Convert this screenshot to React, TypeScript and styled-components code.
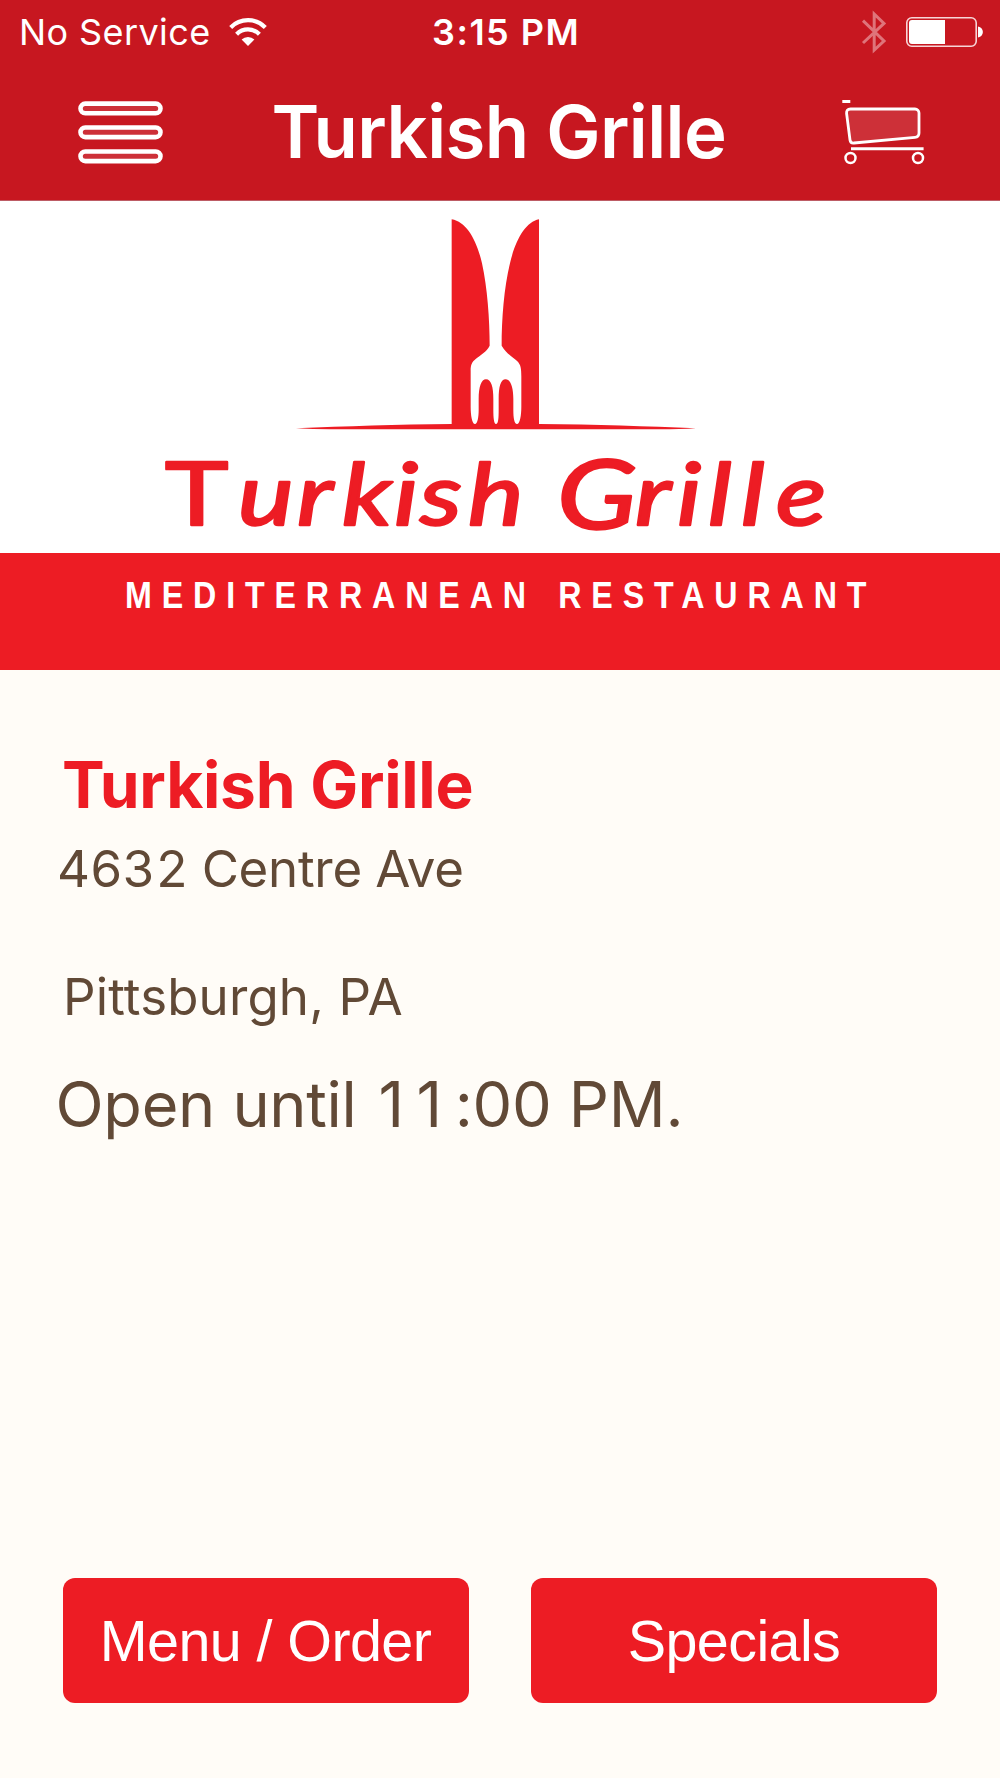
import React from "react";
import styled, { createGlobalStyle } from "styled-components";

const RED = "#ed1c24";
const BAR = "#c71720";
const INK = "#614936";
const PAPER = "#fffcf7";

const GlobalStyle = createGlobalStyle`
  *, *::before, *::after { box-sizing: border-box; }
  body { margin: 0; background: ${PAPER}; }
`;

const Screen = styled.div`
  display: flex;
  flex-direction: column;
  width: 1000px;
  height: 1778px;
  background: ${PAPER};
  font-family: Inter, "Liberation Sans", sans-serif;
  white-space: nowrap;
  overflow: hidden;
`;

const Header = styled.header`
  height: 201px;
  background: ${BAR};
  border-bottom: 1px solid #bd5c65;
  color: #fff;
`;

const StatusBar = styled.div`
  display: grid;
  grid-template-columns: 432px 1fr auto;
  align-items: center;
  height: 64px;
  padding-right: 17.5px;
`;

const Carrier = styled.div`
  display: flex;
  align-items: center;
  gap: 18.5px;
  padding-left: 19px;
  font-size: 36px;
  letter-spacing: 0.4px;
`;

const Clock = styled.div`
  font-size: 36px;
  font-weight: 600;
  letter-spacing: 1.5px;
`;

const Indicators = styled.div`
  display: flex;
  align-items: center;
  gap: 19.5px;
`;

const NavBar = styled.div`
  display: grid;
  grid-template-columns: 271.5px 1fr 160px;
  align-items: center;
  height: 136px;
`;

const IconButton = styled.button<{ $inset: number }>`
  display: flex;
  margin: 0;
  padding: 0 0 0 ${(p) => p.$inset}px;
  border: 0;
  background: none;
`;

const Title = styled.h1`
  margin: 0;
  padding-bottom: 1px;
  font-size: 72.5px;
  font-weight: 600;
  line-height: 135px;
  letter-spacing: -0.6px;
`;

const Icon = styled.svg`
  display: block;
  flex: none;
  overflow: visible;
`;

const Hero = styled.section`
  height: 351.5px;
  background: #fff;
`;

const Banner = styled.div`
  height: 117px;
  padding-left: 125px;
  background: ${RED};
  color: #fff;
`;

const Tagline = styled.div`
  width: max-content;
  font: 700 37px/85px "Liberation Sans", Arial, sans-serif;
  letter-spacing: 11.35px;
  word-spacing: 4px;
  transform: scaleX(0.87);
  transform-origin: left center;
`;

const Info = styled.section`
  flex: 1;
  padding-top: 73px;
  color: ${INK};
`;

const Name = styled.h2`
  margin: 0;
  padding-left: 62px;
  color: ${RED};
  font-size: 64px;
  font-weight: 700;
  line-height: 83px;
  letter-spacing: -0.26px;
`;

const InfoLine = styled.p<{ $size: number; $left: number; $gap?: number; $track?: number; $tabular?: boolean }>`
  margin: ${(p) => p.$gap ?? 0}px 0 0;
  padding-left: ${(p) => p.$left}px;
  font-size: ${(p) => p.$size}px;
  font-variant-numeric: ${(p) => (p.$tabular ? "tabular-nums" : "normal")};
  line-height: 84px;
  letter-spacing: ${(p) => p.$track ?? 0}px;
`;

const Hour = styled.span`
  margin-left: 4.5px;
  letter-spacing: 12.5px;
`;

const Actions = styled.footer`
  display: grid;
  grid-template-columns: 406px 406px;
  gap: 62.5px;
  padding: 0 0 75.5px 62.5px;
`;

const ActionButton = styled.button`
  height: 125px;
  padding: 1px 0 0;
  border: 0;
  border-radius: 12px;
  background: ${RED};
  color: #fff;
  font: 400 57.5px/124px "Liberation Sans", Arial, sans-serif;
  letter-spacing: -0.6px;
`;

const WordMark = styled.text`
  fill: ${RED};
  stroke: ${RED};
  stroke-width: 2.4px;
  stroke-linejoin: round;
  font: italic 400 86px Lato, sans-serif;
`;

const STRETCH = 1.22;
const spread = (xs: number[]) => xs.map((x) => (x / STRETCH).toFixed(1)).join(" ");

const Wifi = () => (
  <Icon width="38" height="28" viewBox="0 0 38 28" fill="none" stroke="#fff" strokeWidth="4.2">
    <path d="M1.7 9.4a24.4 24.4 0 0 1 34.6 0" />
    <path d="M7.6 16.2a16 16 0 0 1 22.8 0" />
    <path d="M12.6 21.6a9 9 0 0 1 12.8 0L19 28z" fill="#fff" stroke="none" />
  </Icon>
);

const Bluetooth = () => (
  <Icon width="24" height="42" viewBox="0 0 24 42" fill="none" stroke="#df747a" strokeWidth="3">
    <path d="M1 9.6 22 30 12.2 39V3L22 12.4 1 32" />
  </Icon>
);

const Battery = () => (
  <Icon width="77" height="30" viewBox="0 0 77 30">
    <rect x="0.8" y="0.8" width="69.4" height="28.4" rx="5" fill="none" stroke="#f7d5d7" strokeWidth="1.6" />
    <path d="M6 3H39V27H6a3 3 0 0 1-3-3V6a3 3 0 0 1 3-3z" fill="#fff" />
    <path d="M72 9.5c6.5 1 6.5 10 0 11z" fill="#fff" />
  </Icon>
);

const Menu = () => (
  <Icon width="85" height="63" viewBox="0 0 85 63" fill="#cd3038" stroke="#fff" strokeWidth="4.6">
    {[2.6, 26.5, 50.5].map((y) => (
      <rect key={y} x="2.5" y={y} width="80" height="9.6" rx="4.8" />
    ))}
  </Icon>
);

const Cart = () => (
  <Icon width="84" height="66" viewBox="0 0 84 66" fill="none" stroke="#fff" strokeWidth="3">
    <path d="M0.3 2.5h8" />
    <path
      d="M8.5 10H73a4 4 0 0 1 4 4V34q0 4-4 4.3L12 44q-3.5.4-4-3L4.6 14.5q-.4-4.5 3.9-4.5z"
      fill="#cd3038"
      strokeWidth="2.8"
    />
    <path d="M9 49.8H81.6" />
    <circle cx="8.5" cy="59" r="5" strokeWidth="2.5" />
    <circle cx="76" cy="59" r="5" strokeWidth="2.5" />
  </Icon>
);

const Logo = () => (
  <Icon width="1000" height="351" viewBox="0 201 1000 351">
    <g transform="translate(280 200) scale(.33333)" fill={RED}>
      <path d="M515 58C560 66 590 120 606 190C622 262 629 360 629 437C620 456 600 466 588 476C576 485 572 494 572 512V620C572 645 576 672 585 672C593 672 596 650 596 630V597C596 560 604 538 618 538C634 538 640 562 640 597V630C640 655 642 672 648 672C655 672 656 655 656 630V597C656 560 662 538 677 538C692 538 700 562 700 597V630C700 655 703 672 711 672C720 672 724 645 724 620V530C724 505 722 494 712 484C700 472 680 462 665 437C665 360 672 262 690 190C706 120 737 66 777 58V672C950 673 1100 679 1248 685Q1200 688 1140 688H150Q100 688 48 685C200 679 350 673 515 672Z" />
    </g>
    <g transform={`scale(${STRETCH} 1)`}>
      <WordMark y="525" x={spread([165, 238, 297, 342, 394, 420, 468])}>
        <tspan fontStyle="normal" fontSize="88">T</tspan>urkish
      </WordMark>
      <WordMark y="529 525" x={spread([557, 635, 677, 708, 741, 776])}>
        <tspan fontSize="96">G</tspan>rille
      </WordMark>
    </g>
  </Icon>
);

export default function App() {
  return (
    <Screen>
      <GlobalStyle />
      <Header>
        <StatusBar>
          <Carrier>
            No Service
            <Wifi />
          </Carrier>
          <Clock>3:15 PM</Clock>
          <Indicators>
            <Bluetooth />
            <Battery />
          </Indicators>
        </StatusBar>
        <NavBar>
          <IconButton $inset={78} aria-label="Menu">
            <Menu />
          </IconButton>
          <Title>Turkish Grille</Title>
          <IconButton $inset={2} aria-label="Cart">
            <Cart />
          </IconButton>
        </NavBar>
      </Header>
      <Hero>
        <Logo />
      </Hero>
      <Banner>
        <Tagline>MEDITERRANEAN RESTAURANT</Tagline>
      </Banner>
      <Info>
        <Name>Turkish Grille</Name>
        <InfoLine $size={51} $left={57} $gap={1} $track={-0.27} $tabular>4632 Centre Ave</InfoLine>
        <InfoLine $size={51} $left={63} $gap={44.5} $track={0.15}>Pittsburgh, PA</InfoLine>
        <InfoLine $size={63} $left={55.5} $gap={22.5} $track={-0.3}>
          Open until <Hour>11</Hour>:00 PM.
        </InfoLine>
      </Info>
      <Actions>
        <ActionButton>Menu / Order</ActionButton>
        <ActionButton>Specials</ActionButton>
      </Actions>
    </Screen>
  );
}
